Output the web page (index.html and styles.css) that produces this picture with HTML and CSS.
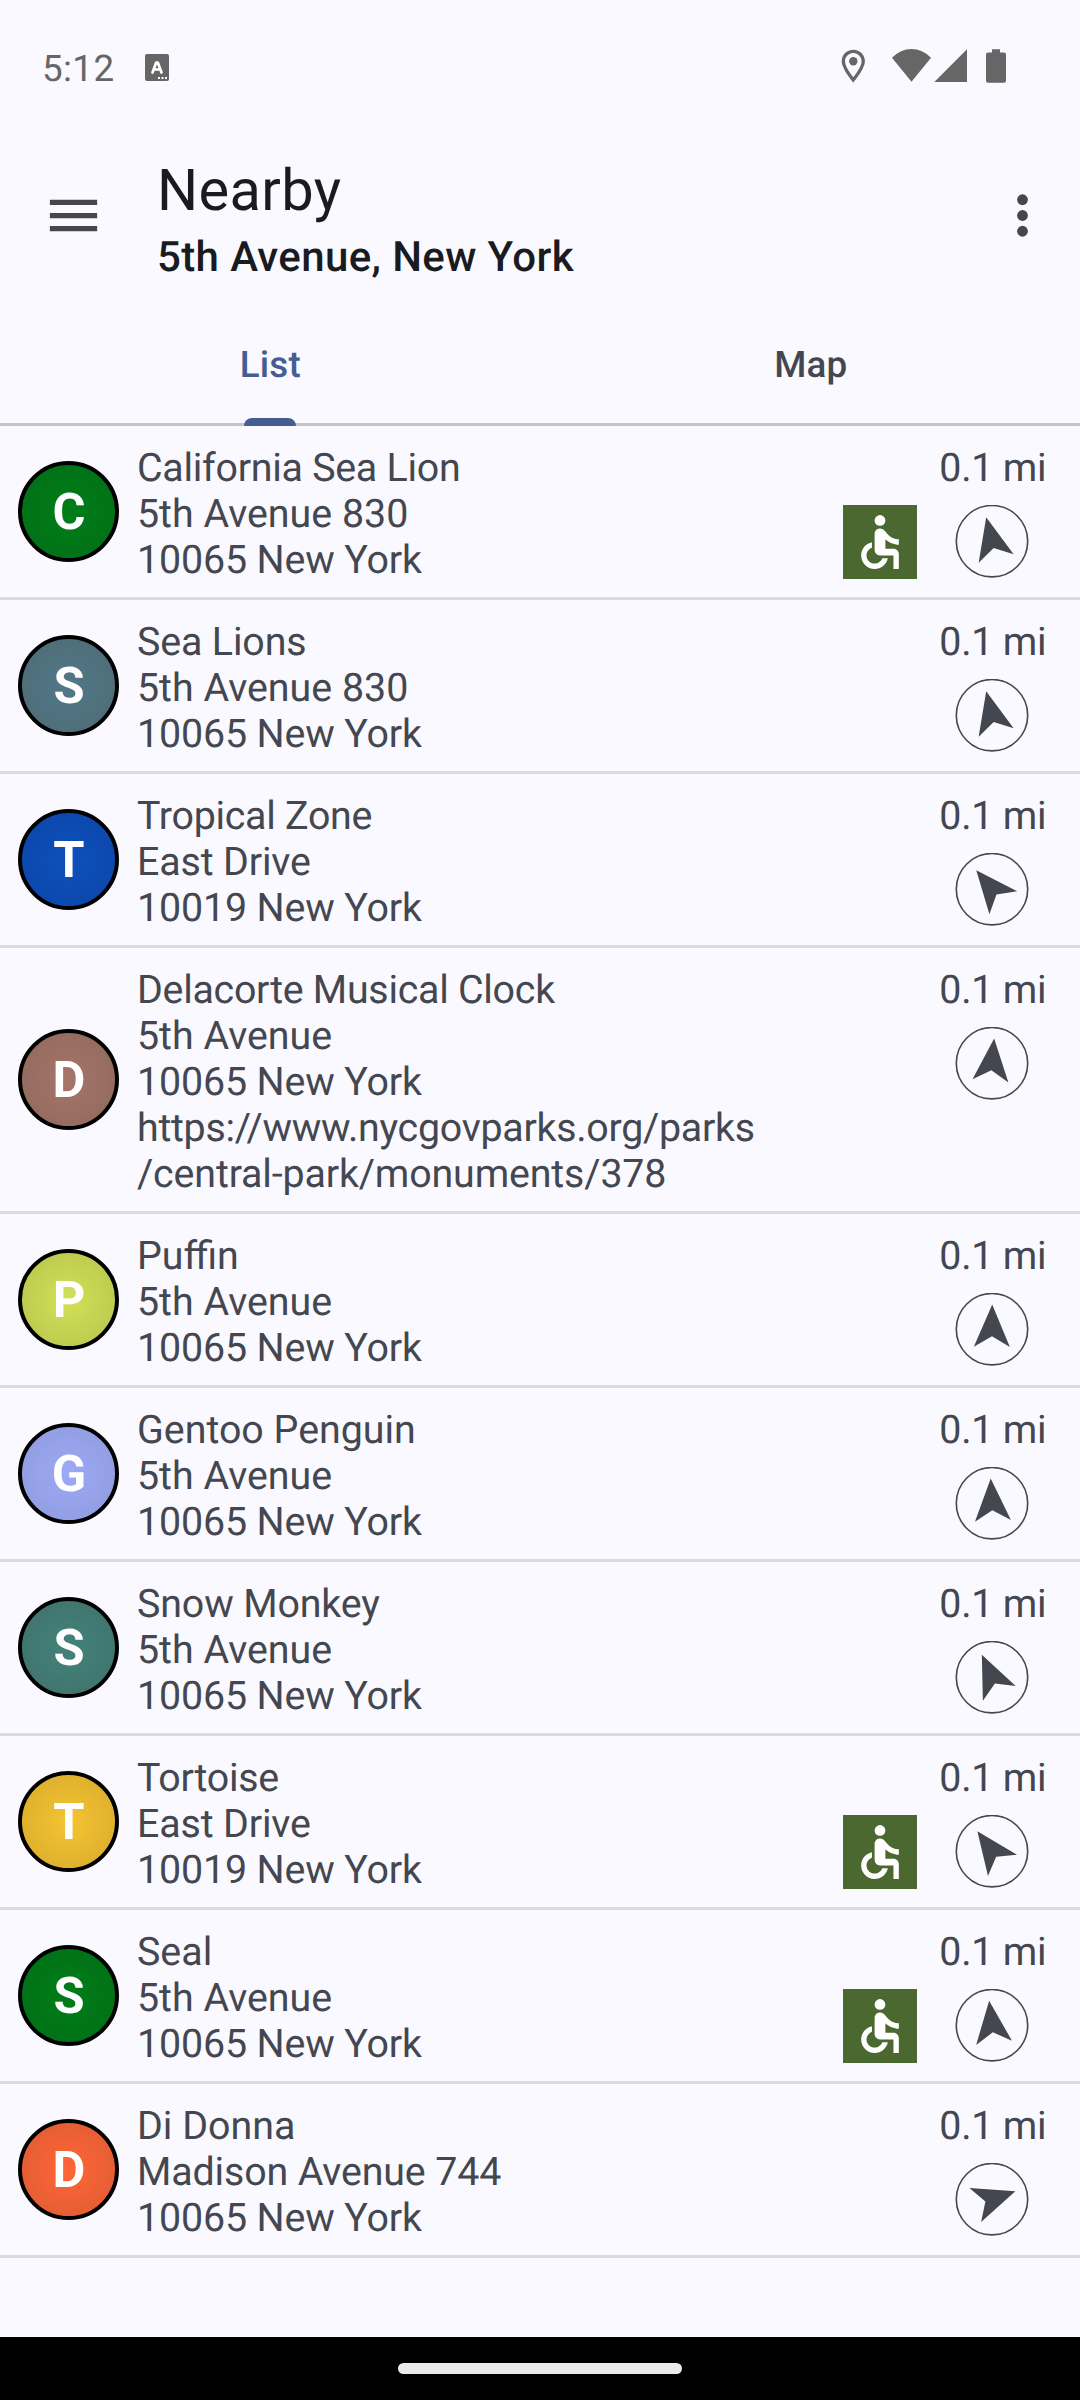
FILE: index.html
```html
<!DOCTYPE html>
<html lang="en">
<head>
<meta charset="utf-8">
<title>Nearby</title>
<link rel="stylesheet" href="styles.css">
</head>
<body>
<svg class="defs" aria-hidden="true">
  <symbol id="wheelchair" viewBox="-1.75 -1.75 27.5 27.5">
    <circle cx="12" cy="4" r="2"/>
    <path d="M19 13v-2c-1.54.02-3.09-.75-4.07-1.83l-1.29-1.43c-.17-.19-.38-.34-.61-.45-.01 0-.01-.01-.02-.01H13c-.35-.2-.75-.3-1.19-.26C10.76 7.11 10 8.04 10 9.09V15c0 1.1.9 2 2 2h5v5h2v-5.5c0-1.1-.9-2-2-2h-3v-3.45c1.29 1.07 3.25 1.94 5 1.95zm-6.17 5c-.41 1.16-1.52 2-2.83 2-1.66 0-3-1.34-3-3 0-1.31.84-2.41 2-2.83V12.1c-2.28.46-4 2.48-4 4.9 0 2.76 2.24 5 5 5 2.42 0 4.44-1.72 4.9-4h-2.07z"/>
  </symbol>
</svg>
<div class="screen">
  <div class="status">
    <span class="clock">5:12</span>
    <svg class="keyboard" viewBox="0 0 24 27"><rect width="24" height="27" rx="2" fill="#666"/><path d="M7.5 18.5 11.2 8.5h1.6l3.700 10M9 15.500h6" fill="none" stroke="#fff" stroke-width="2.700" stroke-linecap="round" stroke-linejoin="round"/><path d="M13 23h2v2h-2zM16.500 23h2v2h-2zM20 23h2v2h-2z" fill="#fff"/></svg>
    <svg class="sys" viewBox="840 48 168 36" fill="#666"><path fill-rule="evenodd" d="M853.300 49.700c-6.500 0-11.600 5.100-11.600 11.500 0 7.800 11.600 21.300 11.600 21.300s11.600-13.500 11.600-21.300c0-6.400-5.100-11.500-11.600-11.500zm0 3.200c4.600 0 8.300 3.700 8.300 8.300 0 4.500-4.800 11.600-8.300 16-3.500-4.400-8.300-11.500-8.300-16 0-4.600 3.700-8.300 8.300-8.300z"/><circle cx="853.300" cy="61.300" r="4.200"/><path d="M911.500 81.700 892 57.800Q900.500 49 911.500 49T931 57.800ZM934.300 82 967 49.200V82ZM992 49.200h8v3.200h4a2 2 0 0 1 2 2v26.300a2 2 0 0 1-2 2h-16a2 2 0 0 1-2-2V54.400a2 2 0 0 1 2-2h4z"/></svg>
  </div>
  <header class="appbar">
    <svg class="icon" viewBox="0 0 24 24"><path d="M3 18h18v-2H3zm0-5h18v-2H3zm0-7v2h18V6z"/></svg>
    <div class="titles">
      <h1>Nearby</h1>
      <h2>5th Avenue, New York</h2>
    </div>
    <svg class="icon" viewBox="0 0 24 24"><circle cx="12" cy="6" r="2.050"/><circle cx="12" cy="12" r="2.050"/><circle cx="12" cy="18" r="2.050"/></svg>
  </header>
  <nav class="tabs">
    <div class="tab active">List</div>
    <div class="tab">Map</div>
  </nav>
  <main class="list">
    <div class="row"><div class="avatar green">C</div><div class="text"><p class="tight">California Sea Lion</p><p>5th Avenue 830</p><p class="snug">10065 New York</p></div><svg class="badge"><use href="#wheelchair"/></svg><div class="side"><span>0.1 mi</span><svg class="compass" viewBox="-37 -36.2 74 74"><circle r="35.700"/><path d="M0-24.700 18 17.700 0 7-18 17.700Z" transform="rotate(-13.600)"/></svg></div></div>
    <div class="row"><div class="avatar slate">S</div><div class="text"><p class="snug">Sea Lions</p><p>5th Avenue 830</p><p class="snug">10065 New York</p></div><div class="side"><span>0.1 mi</span><svg class="compass" viewBox="-37 -36.2 74 74"><circle r="35.700"/><path d="M0-24.700 18 17.700 0 7-18 17.700Z" transform="rotate(-13.600)"/></svg></div></div>
    <div class="row"><div class="avatar blue">T</div><div class="text"><p class="tight">Tropical Zone</p><p class="snug">East Drive</p><p class="snug">10019 New York</p></div><div class="side"><span>0.1 mi</span><svg class="compass" viewBox="-37 -36.2 74 74"><circle r="35.700"/><path d="M0-24.700 18 17.700 0 7-18 17.700Z" transform="rotate(-39.600)"/></svg></div></div>
    <div class="row"><div class="avatar brown">D</div><div class="text"><p class="tight">Delacorte Musical Clock</p><p>5th Avenue</p><p class="snug">10065 New York</p><p class="tight">https://www.nycgovparks.org/parks</p><p class="snug">/central-park/monuments/378</p></div><div class="side"><span>0.1 mi</span><svg class="compass" viewBox="-37 -36.2 74 74"><circle r="35.700"/><path d="M0-24.700 18 17.700 0 7-18 17.700Z" transform="rotate(5)"/></svg></div></div>
    <div class="row"><div class="avatar lime">P</div><div class="text"><p>Puffin</p><p>5th Avenue</p><p class="snug">10065 New York</p></div><div class="side"><span>0.1 mi</span><svg class="compass" viewBox="-37 -36.2 74 74"><circle r="35.700"/><path d="M0-24.700 18 17.700 0 7-18 17.700Z" transform="rotate(.5)"/></svg></div></div>
    <div class="row"><div class="avatar lilac">G</div><div class="text"><p>Gentoo Penguin</p><p>5th Avenue</p><p class="snug">10065 New York</p></div><div class="side"><span>0.1 mi</span><svg class="compass" viewBox="-37 -36.2 74 74"><circle r="35.700"/><path d="M0-24.700 18 17.700 0 7-18 17.700Z" transform="rotate(-3)"/></svg></div></div>
    <div class="row"><div class="avatar teal">S</div><div class="text"><p class="snug">Snow Monkey</p><p>5th Avenue</p><p class="snug">10065 New York</p></div><div class="side"><span>0.1 mi</span><svg class="compass" viewBox="-37 -36.2 74 74"><circle r="35.700"/><path d="M0-24.700 18 17.700 0 7-18 17.700Z" transform="rotate(-24.300)"/></svg></div></div>
    <div class="row"><div class="avatar gold">T</div><div class="text"><p class="tight">Tortoise</p><p class="snug">East Drive</p><p class="snug">10019 New York</p></div><svg class="badge"><use href="#wheelchair"/></svg><div class="side"><span>0.1 mi</span><svg class="compass" viewBox="-37 -36.2 74 74"><circle r="35.700"/><path d="M0-24.700 18 17.700 0 7-18 17.700Z" transform="rotate(-36.300)"/></svg></div></div>
    <div class="row"><div class="avatar green">S</div><div class="text"><p>Seal</p><p>5th Avenue</p><p class="snug">10065 New York</p></div><svg class="badge"><use href="#wheelchair"/></svg><div class="side"><span>0.1 mi</span><svg class="compass" viewBox="-37 -36.2 74 74"><circle r="35.700"/><path d="M0-24.700 18 17.700 0 7-18 17.700Z" transform="rotate(-6.700)"/></svg></div></div>
    <div class="row"><div class="avatar orange">D</div><div class="text"><p>Di Donna</p><p class="snug">Madison Avenue 744</p><p class="snug">10065 New York</p></div><div class="side"><span>0.1 mi</span><svg class="compass" viewBox="-37 -36.2 74 74"><circle r="35.700"/><path d="M0-24.700 18 17.700 0 7-18 17.700Z" transform="rotate(71)"/></svg></div></div>
  </main>
  <div class="navbar"><div class="handle"></div></div>
</div>
</body>
</html>
```
FILE: styles.css
```css
* { box-sizing: border-box; }
body { margin: 0; background: #faf9ff; font-family: Roboto, sans-serif; color: #44474f; text-rendering: geometricPrecision; }
.defs { display: none; }
.screen { width: 1080px; height: 2400px; display: flex; flex-direction: column; }
.status { height: 136px; padding: 0 72px 0 42px; display: flex; align-items: center; color: #666; }
.clock { font-size: 36.75px; line-height: 44px; letter-spacing: .4px; padding-top: 1px; }
.keyboard { width: 24px; height: 27px; margin-left: 31px; margin-top: -1px; }
.sys { width: 168px; height: 36px; margin: -4px 0 0 auto; }
.appbar { height: 158px; padding: 0 26px 0 42px; display: flex; align-items: center; }
.icon { width: 63px; height: 63px; fill: #44474f; }
.titles { flex: 1; margin-left: 52px; color: #1a1b20; }
h1 { margin: 10px 0 0; font-size: 57.75px; line-height: 68px; font-weight: 400; letter-spacing: .35px; }
h2 { margin: 8px 0 0; font-size: 42px; line-height: 50px; font-weight: 500; letter-spacing: .38px; }
.tabs { height: 132px; display: flex; border-bottom: 3px solid #c5c5c8; }
.tab { flex: 1; position: relative; text-align: center; font-size: 36.75px; line-height: 44px; font-weight: 500; padding-top: 49px; padding-left: 2px; letter-spacing: .2px; }
.active { color: #445e91; padding-left: 1px; }
.active::after { content: ""; position: absolute; left: 244px; bottom: -3px; width: 52px; height: 8px; border-radius: 8px 8px 0 0; background: #445e91; }
.list { flex: 1; }
.row { display: flex; align-items: flex-start; padding: 19px 32px 14px 18px; border-bottom: 3px solid #dbdbdf; font-size: 39.375px; line-height: 46px; }
.avatar { align-self: center; width: 101px; height: 101px; margin: -4px 18px 1px 0; border: 4px solid #000; border-radius: 50%; color: #fff; font-size: 50.5px; line-height: 95px; padding-left: 1px; font-weight: 700; text-align: center; }
.text { flex: 1; white-space: nowrap; }
.text p { margin: 0; }
.snug { letter-spacing: -.14px; }
.tight { letter-spacing: -.27px; }
.badge { width: 74px; height: 74px; margin: 60px 21px -20px 0; background: #4b6830; fill: #fff; }
.side { width: 110px; display: flex; flex-direction: column; align-items: flex-end; white-space: nowrap; }
.side span { letter-spacing: -.2px; margin-right: 1.5px; }
.compass { width: 74px; height: 74px; margin: 14px 19px -74px 0; fill: #44474f; }
.compass circle { fill: none; stroke: #44474f; stroke-width: 1.6; }
.green { background: radial-gradient(circle, #007e19, #006d16); }
.slate { background: radial-gradient(circle, #527888, #4e6a74); }
.blue { background: radial-gradient(circle, #0d50bd, #0c45a6); }
.brown { background: radial-gradient(circle, #a67569, #8f685e); }
.lime { background: radial-gradient(circle, #d3e157, #b7c34d); }
.lilac { background: radial-gradient(circle, #9ca9f5, #8f9adc); }
.teal { background: radial-gradient(circle, #42827a, #41716b); }
.gold { background: radial-gradient(circle, #f6c432, #d5aa2d); }
.orange { background: radial-gradient(circle, #ff6636, #dc5b33); }
.navbar { height: 63px; background: #000; display: flex; justify-content: center; padding-top: 26px; }
.handle { width: 284px; height: 11px; border-radius: 5.5px; background: #ebebeb; }
```
